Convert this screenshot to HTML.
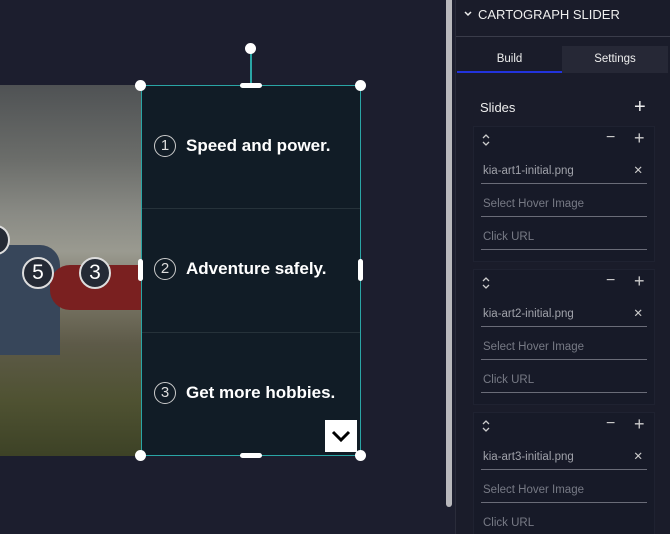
<!DOCTYPE html>
<html style="overflow:hidden;width:670px;height:534px"><head><style>
*{margin:0;padding:0;box-sizing:border-box}
body{width:670px;height:534px;background:#1c1e2e;font-family:"Liberation Sans",sans-serif;position:relative;overflow:hidden}
.abs{position:absolute}
.photo{left:0;top:85px;width:141px;height:371px;overflow:hidden;background:linear-gradient(180deg,#4f5254 0%,#6b6d6a 20%,#8a8b85 35%,#9a9a90 45%,#7e7a6a 55%,#5d5a48 70%,#4f5232 85%,#3d4226 100%)}
.panel{left:141px;top:85px;width:220px;height:371px;background:#111c26;border:1px solid #2aa5a5}
.sec{position:absolute;left:0;width:218px;height:119px;border-bottom:1px solid #26323a;color:#fff;font-size:17px;font-weight:bold;display:flex;align-items:center;padding-left:12px}
.num{display:inline-block;width:22px;height:22px;border:1.5px solid #ccc;border-radius:50%;font-size:15px;font-weight:normal;color:#ddd;text-align:center;line-height:19px;margin-right:10px}
.h{width:11px;height:11px;border-radius:50%;background:#fff;position:absolute}
.side{background:#1a1c2a;left:455px;top:0;width:215px;height:534px;border-left:1px solid #2a2c3a}
.card{position:absolute;left:473px;width:182px;height:136px;background:#171a28;border:1px solid #1f2231}
.f{position:absolute;left:7px;width:166px;border-bottom:1px solid #6a6c78;font-size:11.5px;color:#777a85;padding-left:2px;height:22px;line-height:18px}
.ic{position:absolute;color:#ccc;font-size:16px}
.ln{position:absolute;left:0;width:218px;height:1px;background:#26323a}
</style></head><body>
<div class="abs photo">
<div class="abs" style="left:0;top:160px;width:60px;height:110px;background:#37465a;border-radius:10px 20px 0 0"></div>
<div class="abs" style="left:50px;top:180px;width:91px;height:45px;background:#7a2020;border-radius:20px 0 0 20px"></div>
<div class="abs" style="left:22px;top:172px;width:32px;height:32px;border-radius:50%;background:#242a35;border:2px solid #ddd;color:#fff;font-size:21px;text-align:center;line-height:28px">5</div>
<div class="abs" style="left:79px;top:172px;width:32px;height:32px;border-radius:50%;background:#242a35;border:2px solid #ddd;color:#fff;font-size:21px;text-align:center;line-height:28px">3</div>
<div class="abs" style="left:-18px;top:140px;width:28px;height:30px;border-radius:50%;background:#242a35;border:2px solid #ddd"></div>
</div>
<div class="abs" style="left:250px;top:49px;width:2px;height:36px;background:#2aa5a5"></div>
<div class="h" style="left:245px;top:43px"></div>
<div class="abs panel">
<div class="sec" style="top:0;border:none">
<span class="num">1</span>Speed and power.</div>
<div class="ln" style="top:122px"></div>
<div class="sec" style="top:123px;border:none"><span class="num">2</span>Adventure safely.</div>
<div class="ln" style="top:246px"></div>
<div class="sec" style="top:247px;border:none"><span class="num">3</span>Get more hobbies.</div>
<div class="abs" style="left:183px;top:334px;width:32px;height:32px;background:#fff"><svg width="32" height="32"><path d="M8 12l8 8 8-8" stroke="#000" stroke-width="3" fill="none"/></svg></div>
</div>
<div class="h" style="left:135px;top:80px"></div><div class="h" style="left:355px;top:80px"></div>
<div class="h" style="left:135px;top:450px"></div><div class="h" style="left:355px;top:450px"></div>
<div class="abs" style="left:240px;top:83px;width:22px;height:5px;border-radius:3px;background:#fff"></div>
<div class="abs" style="left:240px;top:453px;width:22px;height:5px;border-radius:3px;background:#fff"></div>
<div class="abs" style="left:138px;top:259px;width:5px;height:22px;border-radius:3px;background:#fff"></div>
<div class="abs" style="left:358px;top:259px;width:5px;height:22px;border-radius:3px;background:#fff"></div>
<div class="abs" style="left:446px;top:0;width:6px;height:507px;background:#b8b8bc;border-radius:0 0 3px 3px"></div>
<div class="abs side"></div>
<svg class="abs" style="left:464px;top:11px" width="8" height="6"><path d="M1 1l3 3 3-3" stroke="#eee" stroke-width="1.5" fill="none"/></svg>
<div class="abs" style="left:478px;top:7px;color:#eee;font-size:13px">CARTOGRAPH SLIDER</div>
<div class="abs" style="left:456px;top:36px;width:214px;height:1px;background:#3a3c4a"></div>
<div class="abs" style="left:457px;top:46px;width:105px;height:27px;color:#eee;font-size:11.5px;text-align:center;line-height:26px;border-bottom:2px solid #2233dd">Build</div>
<div class="abs" style="left:562px;top:46px;width:106px;height:27px;background:#262836;color:#eee;font-size:11.5px;text-align:center;line-height:26px">Settings</div>
<div class="abs" style="left:480px;top:100px;color:#eee;font-size:13px">Slides</div>
<div class="abs ic" style="left:634px;top:96px;font-size:20px;color:#eee">+</div>
<div class="card" style="top:126px"><svg class="abs" style="left:7px;top:6px" width="10" height="14"><path d="M2 5l3-3 3 3M2 9l3 3 3-3" stroke="#ccc" stroke-width="1.3" fill="none"/></svg><div class="ic" style="left:132px;top:2px">−</div><div class="ic" style="left:160px;top:1px;font-size:18px">+</div>
<div class="f" style="top:35px;color:#a0a2aa">kia-art1-initial.png<span style="position:absolute;right:4px;color:#ccc">✕</span></div><div class="f" style="top:68px">Select Hover Image</div><div class="f" style="top:101px">Click URL</div></div>
<div class="card" style="top:269px"><svg class="abs" style="left:7px;top:6px" width="10" height="14"><path d="M2 5l3-3 3 3M2 9l3 3 3-3" stroke="#ccc" stroke-width="1.3" fill="none"/></svg><div class="ic" style="left:132px;top:2px">−</div><div class="ic" style="left:160px;top:1px;font-size:18px">+</div>
<div class="f" style="top:35px;color:#a0a2aa">kia-art2-initial.png<span style="position:absolute;right:4px;color:#ccc">✕</span></div><div class="f" style="top:68px">Select Hover Image</div><div class="f" style="top:101px">Click URL</div></div>
<div class="card" style="top:412px"><svg class="abs" style="left:7px;top:6px" width="10" height="14"><path d="M2 5l3-3 3 3M2 9l3 3 3-3" stroke="#ccc" stroke-width="1.3" fill="none"/></svg><div class="ic" style="left:132px;top:2px">−</div><div class="ic" style="left:160px;top:1px;font-size:18px">+</div>
<div class="f" style="top:35px;color:#a0a2aa">kia-art3-initial.png<span style="position:absolute;right:4px;color:#ccc">✕</span></div><div class="f" style="top:68px">Select Hover Image</div><div class="f" style="top:101px">Click URL</div></div>
</body></html>
